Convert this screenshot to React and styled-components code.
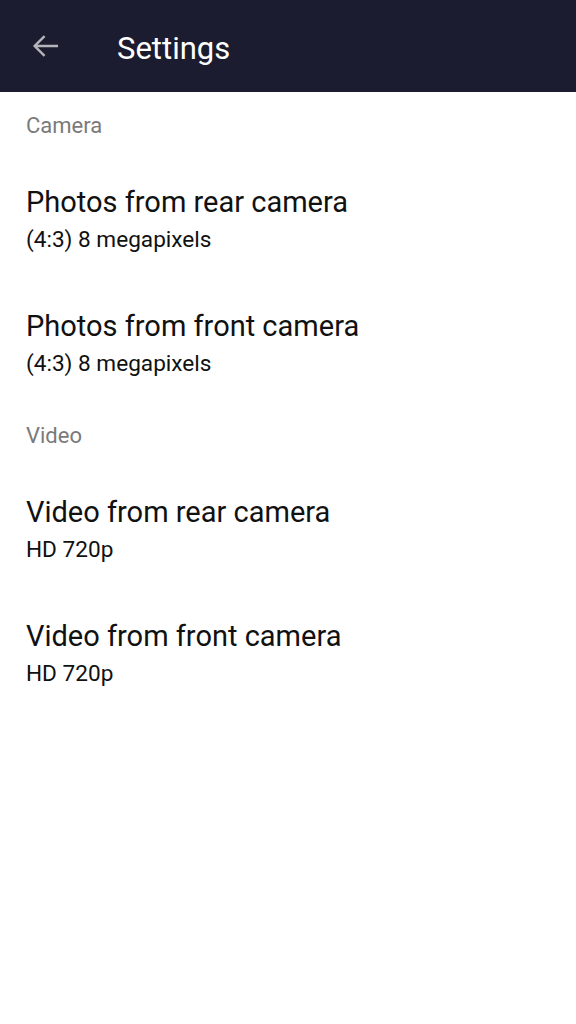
import React from "react";
import styled, { createGlobalStyle } from "styled-components";

const GlobalStyle = createGlobalStyle`
  html, body {
    margin: 0;
    padding: 0;
    background: #ffffff;
    font-family: Roboto, "Noto Sans", sans-serif;
  }
`;

const Page = styled.div`
  width: 576px;
  min-height: 1024px;
  background: #ffffff;
`;

const Header = styled.header`
  height: 92px;
  background: #1b1c2f;
  display: flex;
  align-items: center;
  padding: 0 0 0 28px;
  box-sizing: border-box;
`;

const BackButton = styled.button`
  width: 36px;
  height: 36px;
  padding: 0;
  border: none;
  background: none;
  display: flex;
  align-items: center;
  justify-content: center;
  cursor: pointer;
`;

const Title = styled.h1`
  margin: 0 0 0 53px;
  color: #ffffff;
  font-size: 31px;
  font-weight: 400;
  line-height: 36px;
  padding-top: 6px;
`;

const List = styled.div`
  display: flex;
  flex-direction: column;
  padding-top: 4px;
`;

const SectionLabel = styled.div`
  padding: 18px 26px 20px;
  font-size: 22px;
  line-height: 24px;
  color: #7a7a7a;
`;

const Item = styled.div`
  padding: 28px 26px 29px;
  display: flex;
  flex-direction: column;
  cursor: pointer;
`;

const ItemTitle = styled.div`
  font-size: 29px;
  line-height: 32px;
  color: #111111;
`;

const ItemValue = styled.div`
  margin-top: 9px;
  font-size: 22.6px;
  line-height: 26px;
  color: #111111;
`;

const BackIcon = () => (
  <svg width="34" height="34" viewBox="0 0 24 24">
    <path
      d="M20.5 12H4M11 5L4 12l7 7"
      fill="none"
      stroke="#b4b4bb"
      strokeWidth="1.7"
    />
  </svg>
);

const sections = [
  {
    label: "Camera",
    items: [
      { title: "Photos from rear camera", value: "(4:3) 8 megapixels" },
      { title: "Photos from front camera", value: "(4:3) 8 megapixels" },
    ],
  },
  {
    label: "Video",
    items: [
      { title: "Video from rear camera", value: "HD 720p" },
      { title: "Video from front camera", value: "HD 720p" },
    ],
  },
];

const App = () => {
  return (
    <Page>
      <GlobalStyle />
      <Header>
        <BackButton>
          <BackIcon />
        </BackButton>
        <Title>Settings</Title>
      </Header>
      <List>
        {sections.map((section) => (
          <React.Fragment key={section.label}>
            <SectionLabel>{section.label}</SectionLabel>
            {section.items.map((item) => (
              <Item key={item.title}>
                <ItemTitle>{item.title}</ItemTitle>
                <ItemValue>{item.value}</ItemValue>
              </Item>
            ))}
          </React.Fragment>
        ))}
      </List>
    </Page>
  );
};

export default App;
